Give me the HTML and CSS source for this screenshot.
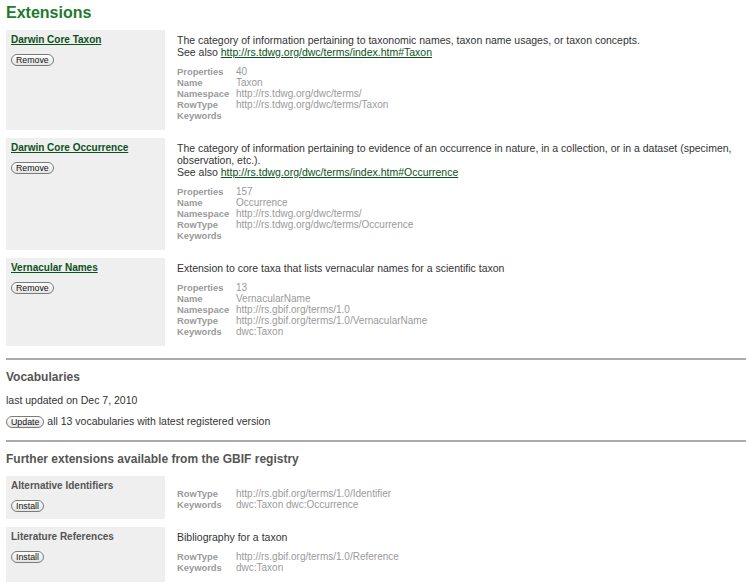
FILE: index.html
```html
<!DOCTYPE html>
<html>
<head>
<meta charset="utf-8">
<title>Extensions</title>
<link rel="stylesheet" href="styles.css">
</head>
<body>
<h1 class="page-title">Extensions</h1>

<div class="ext-list">
  <div class="ext">
    <div class="ext-left">
      <a class="ext-title" href="#">Darwin Core Taxon</a>
      <div><button class="btn">Remove</button></div>
    </div>
    <div class="ext-right">
      <p class="desc">The category of information pertaining to taxonomic names, taxon name usages, or taxon concepts.<br>See also <a class="link" href="#">http://rs.tdwg.org/dwc/terms/index.htm#Taxon</a></p>
      <table class="props">
        <tr><th>Properties</th><td>40</td></tr>
        <tr><th>Name</th><td>Taxon</td></tr>
        <tr><th>Namespace</th><td>http://rs.tdwg.org/dwc/terms/</td></tr>
        <tr><th>RowType</th><td>http://rs.tdwg.org/dwc/terms/Taxon</td></tr>
        <tr><th>Keywords</th><td></td></tr>
      </table>
    </div>
  </div>

  <div class="ext">
    <div class="ext-left">
      <a class="ext-title" href="#">Darwin Core Occurrence</a>
      <div><button class="btn">Remove</button></div>
    </div>
    <div class="ext-right">
      <p class="desc">The category of information pertaining to evidence of an occurrence in nature, in a collection, or in a dataset (specimen, observation, etc.).<br>See also <a class="link" href="#">http://rs.tdwg.org/dwc/terms/index.htm#Occurrence</a></p>
      <table class="props">
        <tr><th>Properties</th><td>157</td></tr>
        <tr><th>Name</th><td>Occurrence</td></tr>
        <tr><th>Namespace</th><td>http://rs.tdwg.org/dwc/terms/</td></tr>
        <tr><th>RowType</th><td>http://rs.tdwg.org/dwc/terms/Occurrence</td></tr>
        <tr><th>Keywords</th><td></td></tr>
      </table>
    </div>
  </div>

  <div class="ext">
    <div class="ext-left">
      <a class="ext-title" href="#">Vernacular Names</a>
      <div><button class="btn">Remove</button></div>
    </div>
    <div class="ext-right">
      <p class="desc">Extension to core taxa that lists vernacular names for a scientific taxon</p>
      <table class="props">
        <tr><th>Properties</th><td>13</td></tr>
        <tr><th>Name</th><td>VernacularName</td></tr>
        <tr><th>Namespace</th><td>http://rs.gbif.org/terms/1.0</td></tr>
        <tr><th>RowType</th><td>http://rs.gbif.org/terms/1.0/VernacularName</td></tr>
        <tr><th>Keywords</th><td>dwc:Taxon</td></tr>
      </table>
    </div>
  </div>
</div>

<hr class="rule rule-first">

<h2 class="section-title vocab-title">Vocabularies</h2>
<p class="text">last updated on Dec 7, 2010</p>
<p class="text update-line"><button class="btn">Update</button> all 13 vocabularies with latest registered version</p>

<hr class="rule rule-second">

<h2 class="section-title further-title">Further extensions available from the GBIF registry</h2>

<div class="ext-list further">
  <div class="ext">
    <div class="ext-left">
      <span class="ext-name">Alternative Identifiers</span>
      <div><button class="btn">Install</button></div>
    </div>
    <div class="ext-right">
      <p class="desc"></p>
      <table class="props">
        <tr><th>RowType</th><td>http://rs.gbif.org/terms/1.0/Identifier</td></tr>
        <tr><th>Keywords</th><td>dwc:Taxon dwc:Occurrence</td></tr>
      </table>
    </div>
  </div>

  <div class="ext">
    <div class="ext-left">
      <span class="ext-name">Literature References</span>
      <div><button class="btn">Install</button></div>
    </div>
    <div class="ext-right">
      <p class="desc">Bibliography for a taxon</p>
      <table class="props">
        <tr><th>RowType</th><td>http://rs.gbif.org/terms/1.0/Reference</td></tr>
        <tr><th>Keywords</th><td>dwc:Taxon</td></tr>
      </table>
    </div>
  </div>
</div>
</body>
</html>
```

FILE: styles.css
```css
html, body {
  margin: 0;
  padding: 0;
  background: #ffffff;
}

body {
  padding-left: 6px;
  font-family: "Liberation Sans", Arial, Helvetica, sans-serif;
  color: #333333;
  overflow: hidden;
}

.page-title {
  margin: 0 0 7px 0;
  padding-top: 3px;
  font-size: 16px;
  line-height: 20px;
  font-weight: bold;
  color: #1d7a2d;
}

.ext {
  display: flex;
  margin-bottom: 8px;
}

.ext-left {
  width: 149px;
  flex: none;
  padding: 4px 5px;
  background: #efefef;
}

.ext-title {
  display: block;
  font-size: 10px;
  line-height: 12px;
  font-weight: bold;
  color: #0c5220;
  text-decoration: underline;
}

.ext-name {
  display: block;
  font-size: 10px;
  line-height: 12px;
  font-weight: bold;
  color: #555555;
}

.ext-left .btn {
  margin-top: 8px;
}

.ext-right {
  flex: 1;
  padding: 4px 0 9px 12px;
}

.desc {
  margin: 0 0 8px 0;
  font-size: 10.5px;
  line-height: 12px;
  color: #333333;
}

.link {
  color: #0c5220;
  text-decoration: underline;
}

.props {
  border-collapse: collapse;
  border-spacing: 0;
}

.props th,
.props td {
  padding: 0;
  height: 11px;
  line-height: 11px;
  vertical-align: middle;
  text-align: left;
  color: #9a9a9a;
}

.props th {
  width: 59px;
  font-size: 9.4px;
  font-weight: bold;
}

.props td {
  font-size: 10px;
}

.btn {
  display: inline-block;
  height: 12px;
  padding: 0 4px;
  margin: 0;
  border: 1px solid #7a7a7a;
  border-radius: 7px;
  background: linear-gradient(#ffffff, #e4e4e4);
  font-family: "Liberation Sans", Arial, Helvetica, sans-serif;
  font-size: 8.8px;
  line-height: 10px;
  color: #111111;
  vertical-align: middle;
  box-sizing: border-box;
}

.rule {
  border: 0;
  height: 2px;
  background: #aaaaaa;
  margin: 0;
}

.rule-first {
  margin-top: 12px;
}

.rule-second {
  margin-top: 12px;
}

.section-title {
  margin: 0;
  font-size: 12px;
  line-height: 15px;
  font-weight: bold;
  color: #555555;
}

.vocab-title {
  margin: 10px 0 9px 0;
}

.further-title {
  margin: 10px 0 0 0;
}

.text {
  margin: 0;
  font-size: 10.5px;
  line-height: 13px;
  color: #333333;
}

.update-line {
  margin-top: 8px;
}

.further {
  margin-top: 9px;
}
```
